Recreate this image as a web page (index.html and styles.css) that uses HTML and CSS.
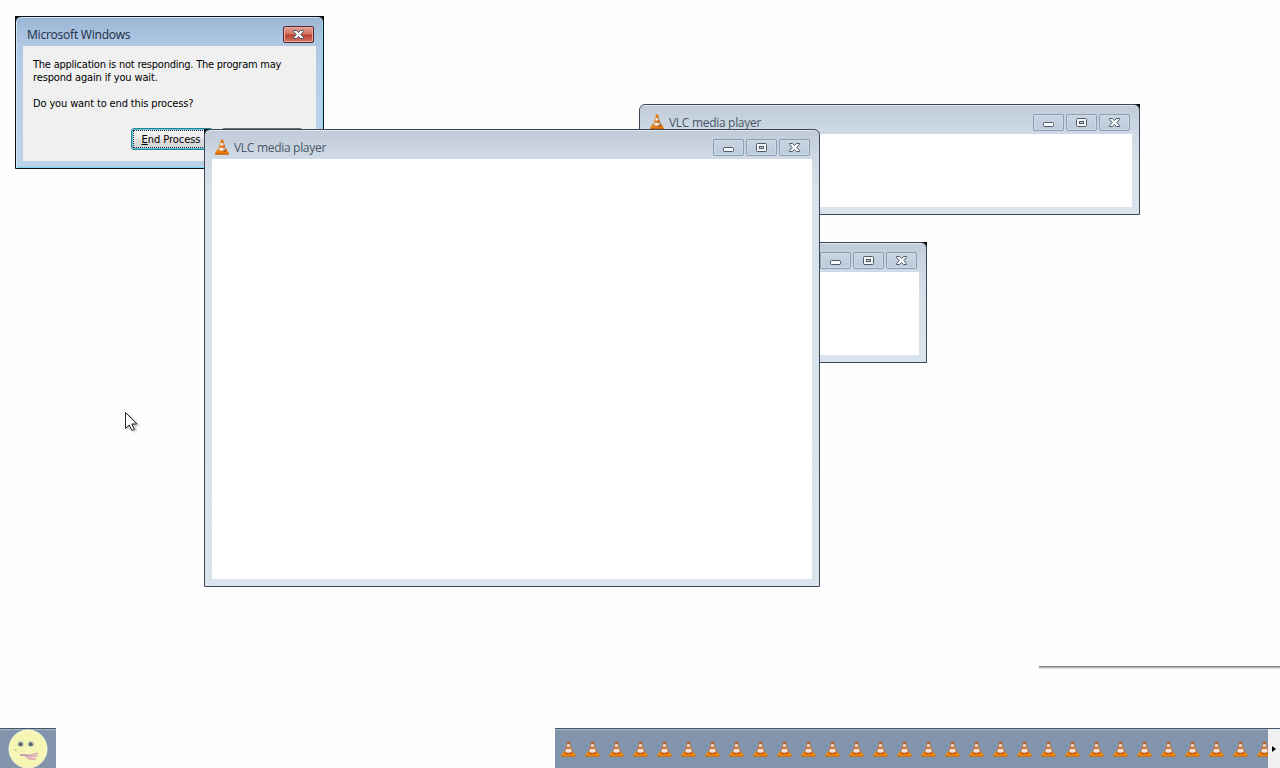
FILE: index.html
```
<!DOCTYPE html>
<html lang="en">
<head>
    <meta charset="utf-8">
    <title>Desktop</title>
    <link rel="stylesheet" href="styles.css">
</head>
<body>
    <svg class="defs" width="0" height="0">
        <defs>
            <linearGradient id="orange">
                <stop offset="0" stop-color="#e58a2b"/>
                <stop offset="0.5" stop-color="#e8780c"/>
                <stop offset="1" stop-color="#9c4508"/>
            </linearGradient>
            <linearGradient id="white">
                <stop offset="0" stop-color="#cdb3a3"/>
                <stop offset="0.45" stop-color="#fbf7f4"/>
                <stop offset="1" stop-color="#a8978f"/>
            </linearGradient>
        </defs>
        <symbol id="cone" viewBox="0 0 14 16">
            <path d="M2.4 10h9.2l2.2 4v1.5H.2V14z" fill="#ea830e"/>
            <path d="M.2 14.3h13.600v1.3H.2z" fill="#c95e08"/>
            <path d="M6.1.5h1.8l3.5 11.7Q7 14.8 2.6 12.2z" fill="url(#orange)"/>
            <path d="M5.5 4h3l.7 2.2Q7 7.1 4.8 6.2z" fill="url(#white)"/>
            <path d="M4.2 8.3Q7 9.6 9.8 8.3l.8 2.5Q7 12.6 3.4 10.8z" fill="url(#white)"/>
        </symbol>
        <!-- heavier cone for the taskbar -->
        <symbol id="cone-task" viewBox="0 0 15 16">
            <path d="M2.8 10.500h9.400l2.500 3.800v1.200H.3v-1.200z" fill="#ee8a12"/>
            <path d="M.3 14.600h14.400v1H.3z" fill="#c8680f"/>
            <path d="M6.600.500h1.800l3.400 11.800q-4.300 2.400-8.600 0z" fill="#c4600f"/>
            <path d="M6.300 3h2.200l.9 2.700q-1.900.8-3.800 0z" fill="#e9d2c2"/>
            <path d="M5.200 7.200q2.300 1 4.600 0l1 3.800q-3.300 1.600-6.600 0z" fill="#f0dfd6"/>
        </symbol>
        <symbol id="min" viewBox="0 0 31 18">
            <rect x="10.5" y="8.5" width="10" height="4" rx="1" fill="#f6f8fa" stroke="#4e5866"/>
        </symbol>
        <symbol id="max" viewBox="0 0 31 18">
            <rect x="10.5" y="4.5" width="10" height="8" rx="1" fill="#f6f8fa" stroke="#4e5866"/>
            <rect x="13.5" y="7.5" width="4" height="2" fill="#c7d2df" stroke="#4e5866"/>
        </symbol>
        <symbol id="close" viewBox="0 0 31 18">
            <path d="M10.5 4.5h3l2 2 2-2h3v1l-2.7 3 2.7 3v1h-3l-2-2-2 2h-3v-1l2.7-3-2.7-3z" fill="#f9fafb" stroke="#4e5866"/>
        </symbol>
    </svg>

    <div class="desktop">
        <div class="window dialog black-left black-right">
            <div class="frame">
                <div class="titlebar">
                    <span class="title">Microsoft Windows</span>
                    <span class="btn red"><svg><use href="#close"/></svg></span>
                </div>
                <div class="client">
                    <p>The application is not responding. The program may<br><span class="loose">respond again if you wait.</span></p>
                    <p class="loose">Do you want to end this process?</p>
                    <div class="actions">
                        <button class="end"><u>E</u>nd Process</button>
                        <button class="cancel"></button>
                    </div>
                </div>
            </div>
        </div>

        <div class="window vlc-small black-right">
            <div class="frame">
                <div class="titlebar">
                    <svg class="icon"><use href="#cone"/></svg>
                    <span class="title">VLC media player</span>
                    <span class="btn"><svg><use href="#min"/></svg></span>
                    <span class="btn"><svg><use href="#max"/></svg></span>
                    <span class="btn"><svg><use href="#close"/></svg></span>
                </div>
                <div class="client"></div>
            </div>
        </div>

        <div class="window vlc-wide black-right">
            <div class="frame">
                <div class="titlebar">
                    <svg class="icon"><use href="#cone"/></svg>
                    <span class="title">VLC media player</span>
                    <span class="btn"><svg><use href="#min"/></svg></span>
                    <span class="btn"><svg><use href="#max"/></svg></span>
                    <span class="btn"><svg><use href="#close"/></svg></span>
                </div>
                <div class="client"></div>
            </div>
        </div>

        <div class="window vlc-main black-left">
            <div class="frame">
                <div class="titlebar">
                    <svg class="icon"><use href="#cone"/></svg>
                    <span class="title">VLC media player</span>
                    <span class="btn"><svg><use href="#min"/></svg></span>
                    <span class="btn"><svg><use href="#max"/></svg></span>
                    <span class="btn"><svg><use href="#close"/></svg></span>
                </div>
                <div class="client"></div>
            </div>
        </div>

        <div class="edge"></div>

        <svg class="cursor" viewBox="0 0 16 22">
            <path d="M1.5 1.5v16l3.7-3.5 2.7 5.5 2.5-1.2-2.6-5.3h5z" fill="#fff" stroke="#222"/>
        </svg>
    </div>

    <div class="taskbar">
        <div class="start">
            <svg class="face" viewBox="0 0 40 40">
                <circle cx="20" cy="20" r="19" fill="#f6f6b4" stroke="#fbfbd2"/>
                <ellipse cx="12.5" cy="15" rx="3.6" ry="3" fill="#d3d5b0"/>
                <ellipse cx="23" cy="15" rx="3.6" ry="3" fill="#d3d5b0"/>
                <circle cx="12.6" cy="15.3" r="2" fill="#56627c"/>
                <circle cx="22.8" cy="15.3" r="2" fill="#56627c"/>
                <path d="M7 20.5l1.5 1" stroke="#b3ad8c" stroke-width="1.5"/>
                <path d="M12 26q9 1.5 18-2M17 27.5q7 1 13-1M19 29q4 1.5 9 1" fill="none" stroke="#dcaab8" stroke-width="1.5"/>
                <path d="M12.5 26h7" stroke="#a8859c"/>
            </svg>
        </div>
        <div class="tray" id="tray"></div>
        <div class="more"></div>
    </div>

    <script>
        const tray = document.getElementById("tray");
        for (let i = 0; i < 30; i++) {
            tray.innerHTML += '<svg><use href="#cone-task"/></svg>';
        }
    </script>
</body>
</html>
```
FILE: styles.css
```
* {box-sizing:border-box;}
body {margin:0; width:1280px; height:768px; overflow:hidden; background:#fefefe; display:flex; flex-direction:column; font-family:"Open Sans","Noto Sans",sans-serif; font-size:12px;}
.defs {position:absolute;}
.desktop {position:relative; flex:1;}

/* windows */
.window {position:absolute; background-repeat:no-repeat;}
.black-left {background-image:linear-gradient(#05070c,#05070c); background-size:6px 6px;}
.black-right {background-image:linear-gradient(#05070c,#05070c); background-size:6px 6px; background-position:right top;}
.black-left.black-right {background-size:100% 6px;}
.frame {height:100%; display:flex; flex-direction:column; padding:0 7px 7px; border:1px solid #3d4654; border-radius:6px 6px 0 0; background:linear-gradient(#c0cbd7,#cedae5 28px,#d7e2ed 60px,#d9e4ef); box-shadow:inset 0 1px #dfe7ef;}
.titlebar {height:29px; flex:none; display:flex; gap:2px; padding:9px 2px 0 3px;}
.title {flex:1; line-height:18px; color:#4a5766; letter-spacing:-0.3px; white-space:nowrap;}
.icon {width:14px; height:16px; margin-right:3px;}
.btn {width:31px; height:17px; border:1px solid #8c9cb2; border-radius:2px; background:linear-gradient(#c9d5e2,#bccada); box-shadow:inset 0 0 0 1px #cfdae6;}
.btn svg {display:block; width:31px; height:18px; margin:-1px;}
.client {flex:1; background:#fff;}

.vlc-main {left:204px; top:129px; width:616px; height:458px;}
.vlc-wide {left:639px; top:104px; width:501px; height:111px;}
.vlc-small {left:427px; top:242px; width:500px; height:121px;}

/* end process dialog */
.dialog {left:15px; top:16px; width:309px; height:153px;}
.dialog .frame {border-color:#08111a; background:linear-gradient(#9ab5d4,#b0c9e5 28px,#b9d0ea 80px,#bad2ea); box-shadow:inset 0 1px #d9e7f5, inset 1px 0 #d3e4f3, inset -1px 0 #86dff2, inset 0 -1px #75d9ee;}
.dialog .title {color:#1b2b42; letter-spacing:-0.22px; padding-left:1px;}
.dialog .client {background:#f0f0f0; padding:12px 10px 0; font-family:"DejaVu Sans Condensed","DejaVu Sans",sans-serif; font-size:11px; line-height:13px; color:#000;}
.dialog p {margin:0 0 13px; letter-spacing:-0.23px; white-space:nowrap;}
.dialog .loose {letter-spacing:-0.14px;}
.red {border-color:#5a2630; background:linear-gradient(#e3a193,#d0705f 48%,#ba3d2b 52%,#d17868); box-shadow:inset 0 0 0 1px #e5ab9e;}
.actions {display:flex; gap:8px; margin:18px 0 0 98px;}
.actions button {flex:none; width:82px; height:22px; padding:0 2px 0 0; border:1px solid #2a7e94; border-radius:3px; background:linear-gradient(#f3f3f3,#ebebeb 49%,#dedede 51%,#d2d2d2); font:inherit; letter-spacing:-0.05px; box-shadow:inset 0 0 0 1px #5ccbe2;}
.actions .end {outline:1px dotted #222; outline-offset:-3px;}
.actions .cancel {border-color:#707070; box-shadow:none;}

.edge {position:absolute; left:1039px; top:666px; width:241px; height:2px; background:linear-gradient(#8a8a8a 50%,#b0b0b0 50%); box-shadow:0 1px 1px #e2e2e2;}
.cursor {position:absolute; left:124px; top:411px; width:16px; height:22px; filter:drop-shadow(2px 1px 1px #bbb);}

/* taskbar */
.taskbar {height:40px; display:flex;}
.start {width:56px; padding:1px 0 0 8px; background:#8295ac; border-top:1px solid #44566b; box-shadow:inset 0 1px #a5b4c4;}
.face {display:block; width:40px; height:40px; margin-top:-1px;}
.tray {width:713px; margin-left:499px; display:flex; gap:9px; padding:12px 0 0 6px; overflow:hidden; background:#8295ac; border-top:1px solid #44566b; box-shadow:inset 0 1px #a5b4c4;}
.tray svg {flex:none; width:15px; height:16px;}
.more {flex:1; display:flex; align-items:center; justify-content:center; background:#f0f0f0; border-top:1px solid #44566b;}
.more::after {content:""; border:3px solid transparent; border-left:4px solid #000; border-right:0;}
```
